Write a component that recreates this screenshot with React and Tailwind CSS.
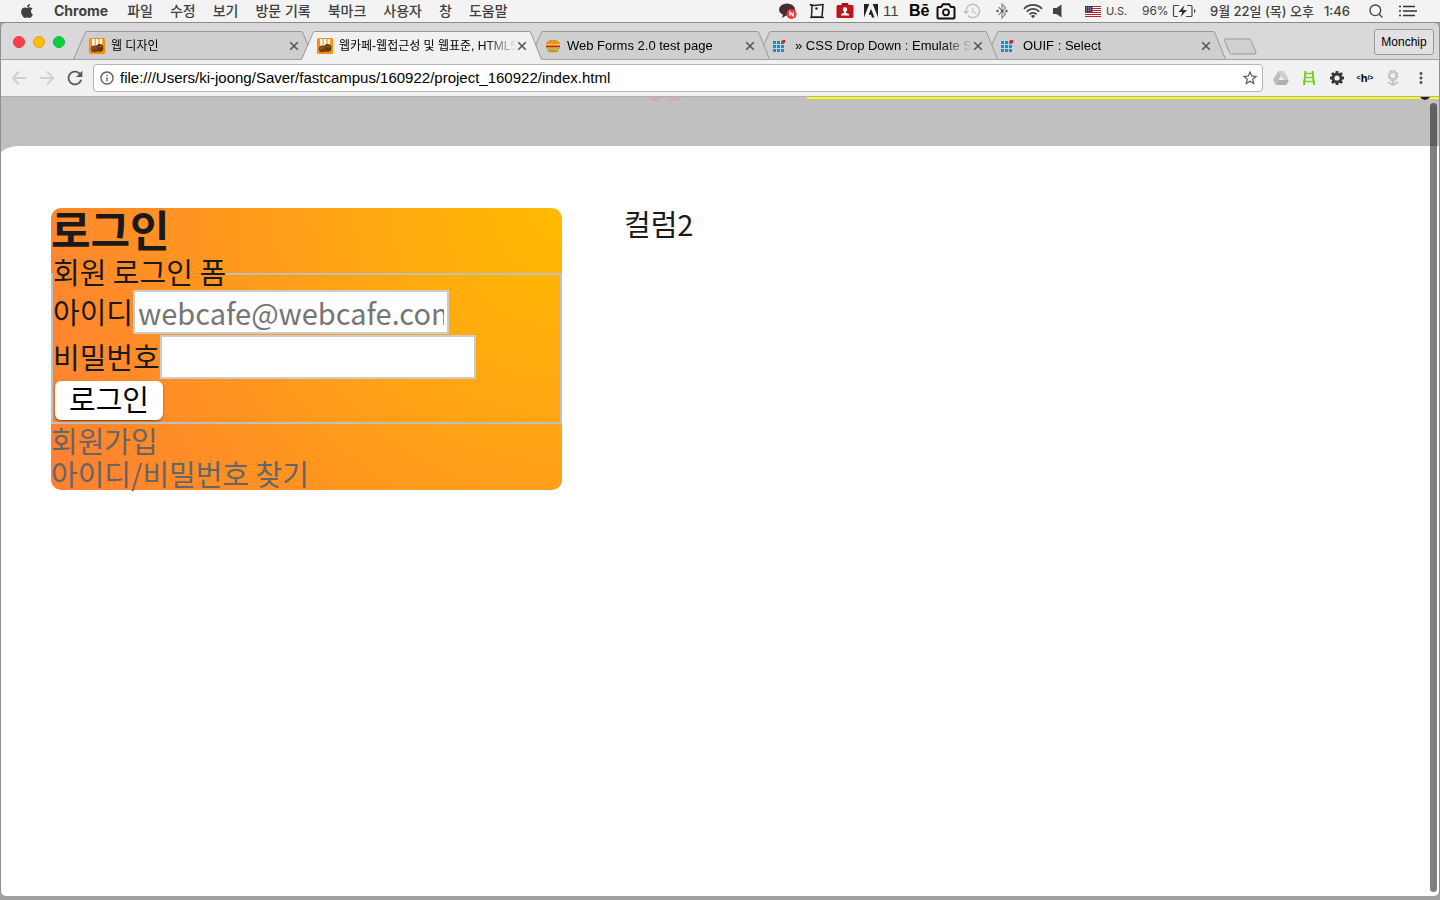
import React from "react";
import { FaApple } from "react-icons/fa";
import { MdRefresh, MdInfoOutline, MdStarBorder, MdMoreVert, MdHistory } from "react-icons/md";
import { Search } from "lucide-react";

const MENUS = ["파일", "수정", "보기", "방문 기록", "북마크", "사용자", "창", "도움말"];

const TABS = [
  { title: "웹 디자인", icon: "cafe", z: "z-40", size: "text-[12px]" },
  { title: "웹카페-웹접근성 및 웹표준, HTML5", icon: "cafe", active: true, z: "z-50", size: "text-[12px]" },
  { title: "Web Forms 2.0 test page", icon: "burger", z: "z-30", size: "text-[13px]" },
  { title: "» CSS Drop Down : Emulate S", icon: "dots", z: "z-20", size: "text-[13px]" },
  { title: "OUIF : Select", icon: "dots", z: "z-10", size: "text-[13px]" },
];

function Favicon({ kind }) {
  if (kind === "cafe") {
    return (
      <svg viewBox="0 0 16 16" className="size-4 shrink-0">
        <rect width="16" height="16" rx="1.5" fill="#ff8c0a" />
        <path d="M3 1h2.600v6.500H3zM6.800 1h2.600v6.500H6.800zM10.600 1h2.600v6.500h-2.600z" fill="#fff" />
        <ellipse cx="5.500" cy="11" rx="3.700" ry="3.200" fill="#6f4318" />
        <ellipse cx="10.700" cy="9.900" rx="3.700" ry="3.800" fill="#5f3913" />
        <path d="M3 10.500q2.500-2 5 0M8.500 9q2.500-1.500 4.500.5" stroke="#a8733a" strokeWidth=".8" fill="none" />
      </svg>
    );
  }
  if (kind === "burger") {
    return (
      <svg viewBox="0 0 16 16" className="size-4 shrink-0">
        <path d="M1 7C1 3.500 4 2 8 2s7 1.500 7 5z" fill="#e08a1e" />
        <path d="M4 4h1v1H4zM7 3h1v1H7zM10 4h1v1h-1zM12 5h1v1h-1zM6 5h1v1H6z" fill="#ffd070" />
        <rect x="1" y="6" width="14" height="1.500" fill="#ffd21a" />
        <rect x="1" y="7.500" width="14" height="2" fill="#d8201a" />
        <path d="M1 9.500h14v1l-2 1-2-1-2 1-2-1-2 1-2-1-2 .5z" fill="#8ac43a" />
        <path d="M2 11.500h12c0 2-2 3-6 3s-6-1-6-3z" fill="#e08a1e" />
      </svg>
    );
  }
  return (
    <svg viewBox="0 0 16 16" className="size-4 shrink-0">
      {[4, 8, 12].map((y) =>
        [0, 4, 8].map((x) => <rect key={`${x}-${y}`} x={x} y={y - 1} width="3" height="3" fill="#0a94d0" />)
      )}
      <rect x="9" y="2" width="3" height="3" fill="#ff1a1a" />
    </svg>
  );
}

function Tab({ tab }) {
  return (
    <div className={`relative -mr-[13px] flex h-[29px] w-[241px] items-center pl-4 pr-[15px] ${tab.z}`}>
      <svg viewBox="0 0 241 29" preserveAspectRatio="none" className="absolute inset-0 size-full" aria-hidden="true">
        <path
          d="M0 29 L1 28 12 2 Q12.500.5 14 .5 H228 Q229.500.5 230 2 L240 28 241 29z"
          fill={tab.active ? "#f1f1f1" : "#cfcfcf"}
        />
        <path d="M.5 28.500 12 2 Q12.500.5 14 .5 H228 Q229.500.5 230 2 L240.500 28.500" fill="none" stroke="#999" />
        {!tab.active && <path d="M0 28.500H241" stroke="#a3a3a3" />}
      </svg>
      <button
        type="button"
        role="tab"
        aria-selected={!!tab.active}
        className={`relative flex min-w-0 flex-1 items-center gap-1.5 text-left leading-4 text-black ${tab.size}`}
      >
        <Favicon kind={tab.icon} />
        <span className="flex-1 overflow-hidden whitespace-nowrap [mask-image:linear-gradient(to_right,#000_82%,transparent)]">
          {tab.title}
        </span>
      </button>
      <button type="button" aria-label="Close tab" className="relative">
        <svg viewBox="0 0 10 10" className="size-2.5">
          <path d="M1.200 1.200 8.800 8.800M8.800 1.200 1.200 8.800" stroke="#555" strokeWidth="1.600" />
        </svg>
      </button>
    </div>
  );
}

function StatusIcons() {
  return (
    <div className="flex items-center">
      <svg viewBox="0 0 20 18" className="h-[18px] w-5">
        <ellipse cx="9" cy="7.500" rx="8" ry="6" fill="#4a2c2e" />
        <path d="M5 12l-1 4 5-3z" fill="#4a2c2e" />
        <circle cx="13.500" cy="12" r="5" fill="#f5343c" />
        <path d="M11.800 14v-4l3.400 4v-4" stroke="#fff" strokeWidth="1.200" fill="none" />
      </svg>
      <svg viewBox="0 0 16 16" className="ml-[11px] size-4">
        <path d="M1 1.500l4 1 9-1-1 12.500H2.500L3 3z" fill="none" stroke="#222" strokeWidth="1.500" />
        <path d="M1 14.500h14" stroke="#222" strokeWidth="1.200" />
        <circle cx="7.500" cy="5.500" r="1.200" fill="#222" />
      </svg>
      <svg viewBox="0 0 18 16" className="ml-[11px] h-4 w-[18px]">
        <rect x="5.500" y="0" width="7" height="4" rx="1" fill="#a31218" />
        <rect x=".5" y="2" width="17" height="13" rx="1.500" fill="#c0141b" />
        <circle cx="9" cy="6.500" r="2.200" fill="#fff" />
        <path d="M8 8h2v2l3 1v1.500H5V11l3-1z" fill="#fff" />
      </svg>
      <svg viewBox="0 0 14 14" className="ml-[10px] size-3.5">
        <path d="M0 0h5.300L0 13.500zM8.700 0H14v13.500zM7 4.800l3.500 8.700H8l-1-2.700H4.600z" fill="#222" />
      </svg>
      <span className="ml-[5px] w-4 font-['Liberation_Sans'] text-[15px] font-normal">11</span>
      <span className="ml-[10px] w-5 font-['Liberation_Sans'] text-[16px] font-bold text-black">Bē</span>
      <svg viewBox="0 0 20 17" className="ml-[7px] h-[17px] w-5">
        <path d="M2.500 4H5l2-2.700h6L15 4h2.500a1 1 0 0 1 1 1v9.500a1 1 0 0 1-1 1h-15a1 1 0 0 1-1-1V5a1 1 0 0 1 1-1z" fill="none" stroke="#111" strokeWidth="2" />
        <circle cx="10" cy="9.300" r="3" fill="none" stroke="#111" strokeWidth="1.800" />
      </svg>
      <MdHistory className="ml-1.5 size-5 text-[#c2c2c2]" />
      <svg viewBox="0 0 14 18" className="ml-[13px] h-[18px] w-3.5">
        <path d="M3.500 5l7 7-3.500 4V2l3.500 4-7 7" fill="none" stroke="#8a8a8a" strokeWidth="1.200" />
        <circle cx="2.500" cy="9" r="1.200" fill="#555" />
        <circle cx="7" cy="9" r="1.200" fill="#555" />
        <circle cx="11.500" cy="9" r="1.200" fill="#555" />
      </svg>
      <svg viewBox="0 0 20 16" className="ml-3.5 h-4 w-5">
        <g fill="none" stroke="#444" strokeWidth="1.800">
          <path d="M1 5.800a12.500 12.500 0 0 1 18 0" />
          <path d="M3.800 8.600a8.600 8.600 0 0 1 12.400 0" />
          <path d="M6.500 11.300a4.900 4.900 0 0 1 7 0" />
        </g>
        <path d="M10 15.300 7.900 13a3 3 0 0 1 4.200 0z" fill="#444" />
      </svg>
      <svg viewBox="0 0 10 14" className="ml-2.5 h-3.5 w-2.5">
        <path d="M0 4h3.500L8.500 0.500v13L3.500 10H0z" fill="#444" />
      </svg>
      <svg viewBox="0 0 16 11" className="ml-[22px] h-[11px] w-4">
        <rect width="16" height="11" fill="#fff" />
        {[0, 2, 4, 6, 8, 10].map((y) => (
          <rect key={y} y={y} width="16" height="1" fill="#b3262e" />
        ))}
        <rect width="7.500" height="6" fill="#35356b" />
        <path d="M1 1.500h6M1 3h6M1 4.500h6" stroke="#d6d6ea" strokeWidth=".6" strokeDasharray="1 1" />
      </svg>
      <span className="ml-[5px] w-6 text-[11px] font-normal">U.S.</span>
      <span className="ml-3 w-[26px] text-[12px] font-normal">96%</span>
      <svg viewBox="0 0 24 14" className="ml-1 h-3.5 w-6">
        <path d="M7 1.500H2.500a1 1 0 0 0-1 1v9a1 1 0 0 0 1 1H6M15 1.500h4a1 1 0 0 1 1 1v9a1 1 0 0 1-1 1h-5" fill="none" stroke="#444" strokeWidth="1.200" />
        <path d="M12.500 1 6.500 8h3.700L8.700 13l6.300-7h-4z" fill="#333" />
        <path d="M22 5v4q1.500-.5 1.500-2T22 5z" fill="#444" />
      </svg>
      <time className="ml-3.5 flex gap-2.5 whitespace-nowrap text-[13px]">
        <span>9월 22일 (목) 오후</span>
        <span>1:46</span>
      </time>
      <Search className="ml-[18px] size-4 text-[#444]" strokeWidth={2} />
      <svg viewBox="0 0 18 12" className="ml-[15px] h-3 w-[18px]">
        <path d="M0 1.500h2M0 6h2M0 10.500h2M4 1.500h12M4 6h14M4 10.500h12" stroke="#333" strokeWidth="1.700" />
      </svg>
    </div>
  );
}

function MenuBar() {
  return (
    <header className="flex h-[23px] shrink-0 items-center justify-between border-b border-[#8a8a8a] bg-[#f3f3f3] pl-[19px] pr-[23px] font-['Inter','Noto_Sans_CJK_KR',sans-serif] font-medium leading-[22px] text-[#404040]">
      <nav className="flex items-center gap-[17px] whitespace-nowrap text-[14px]">
        <FaApple className="size-4" />
        <span className="mx-0.5 font-bold">Chrome</span>
        {MENUS.map((m) => (
          <span key={m}>{m}</span>
        ))}
      </nav>
      <StatusIcons />
    </header>
  );
}

function Extensions() {
  const cell = "flex w-7 items-center justify-center";
  return (
    <div className="ml-1 flex items-center">
      <button type="button" aria-label="Drive" className={cell}>
        <svg viewBox="0 0 16 14" className="h-3.5 w-4">
          <path d="M5.300 0h5.400L16 9h-5.300z" fill="#cfcfcf" />
          <path d="M5.300 0 0 9l2.700 5L8 4.700z" fill="#bdbdbd" />
          <path d="M5.500 9H16l-2.700 5H2.700z" fill="#b0b0b0" />
        </svg>
      </button>
      <button type="button" aria-label="Ladder" className={cell}>
        <svg viewBox="0 0 14 16" className="h-4 w-3.5">
          <path d="M3.500 1 2 15M10.500 1 12 15" stroke="#6abf1e" strokeWidth="1.800" />
          <path d="M2 3.500h10M2 7.500h10M1 11.500h12" stroke="#7ed321" strokeWidth="1.600" />
        </svg>
      </button>
      <button type="button" aria-label="Settings" className={cell}>
        <svg viewBox="0 0 16 16" className="size-4">
          <path d="M8 1v14M1 8h14M3 3l10 10M13 3 3 13" stroke="#383838" strokeWidth="2.800" />
          <circle cx="8" cy="8" r="4" fill="#f1f1f1" stroke="#383838" strokeWidth="2.800" />
        </svg>
      </button>
      <button type="button" aria-label="HTML outline" className={`${cell} text-[7px] font-bold leading-4 text-black`}>
        &lt;<span className="text-[11px]">h</span>/&gt;
      </button>
      <button type="button" aria-label="Flower" className={cell}>
        <svg viewBox="0 0 16 16" className="size-4">
          <circle cx="8" cy="5.500" r="4.300" fill="none" stroke="#c2c2c2" strokeWidth="2.400" strokeDasharray="2.400 .9" />
          <circle cx="8" cy="5.500" r="3.300" fill="none" stroke="#c2c2c2" strokeWidth="1.500" />
          <path d="M8 10v5M3 12l5 3 5-3" fill="none" stroke="#c2c2c2" strokeWidth="1.800" />
        </svg>
      </button>
      <button type="button" aria-label="Menu" className={cell}>
        <MdMoreVert className="size-[18px] text-[#555]" />
      </button>
    </div>
  );
}

function Toolbar() {
  const cell = "flex w-7 items-center justify-center";
  return (
    <div className="flex h-[37px] shrink-0 items-center border-b border-[#b0b0b0] bg-[#f1f1f1] pl-1 pr-1">
      {["Back", "Forward"].map((label) => (
        <button key={label} type="button" aria-label={label} className={cell}>
          <svg viewBox="0 0 16 16" className={label === "Forward" ? "size-4 rotate-180" : "size-4"}>
            <path d="M8 1.500 1.800 8 8 14.500M2 8h13" fill="none" stroke="#d0d0d0" strokeWidth="1.900" />
          </svg>
        </button>
      ))}
      <button type="button" aria-label="Reload" className={cell}>
        <MdRefresh className="size-[22px] text-[#5a5a5a]" />
      </button>
      <div className="ml-1 flex h-7 flex-1 items-center rounded-[4px] border border-[#b4b4b4] bg-white pl-[5px] pr-[3px]">
        <MdInfoOutline className="size-4 shrink-0 text-[#5a5a5a]" />
        <input
          aria-label="Address"
          defaultValue="file:///Users/ki-joong/Saver/fastcampus/160922/project_160922/index.html"
          className="ml-[5px] min-w-0 flex-1 bg-transparent text-[15px] leading-5 text-black outline-none"
        />
        <MdStarBorder className="size-[18px] shrink-0 text-[#5a5a5a]" />
      </div>
      <Extensions />
    </div>
  );
}

function LoginBox() {
  const field = "h-11 w-[316px] border-2 border-[#ccc] bg-white px-[3px] leading-9 placeholder:text-[#757575] outline-none";
  return (
    <section className="w-[511px] rounded-[10px] bg-[radial-gradient(circle_at_top_right,#ffbb00,#ff7f33)]">
      <h1 className="pb-2 text-[43px] font-bold leading-[41px]">로그인</h1>
      <form onSubmit={(e) => e.preventDefault()}>
        <fieldset className="border-2 border-[#c0c0c0]">
          <legend className="pb-1 leading-[29px]">회원 로그인 폼</legend>
          <div className="flex h-11 items-end">
            <label htmlFor="uid" className="leading-[46px]">아이디</label>
            <input id="uid" type="email" placeholder="webcafe@webcafe.com" className={field} />
          </div>
          <div className="flex h-[45px] items-end">
            <label htmlFor="upw" className="leading-[46px]">비밀번호</label>
            <input id="upw" type="password" className={field} />
          </div>
          <div className="flex h-[43px] items-center pl-0.5">
            <button type="submit" className="h-[39px] rounded-[6px] bg-white px-3.5 pb-1 leading-[35px] text-black shadow-[0_1px_2px_rgba(0,0,0,0.5)]">
              로그인
            </button>
          </div>
        </fieldset>
      </form>
      <a href="#join" className="block leading-[33px] text-[#666]">회원가입</a>
      <a href="#find" className="block leading-[33px] text-[#666]">아이디/비밀번호 찾기</a>
    </section>
  );
}

function Page() {
  return (
    <main className="relative flex flex-1 flex-col overflow-hidden rounded-b-[5px] bg-[#c0c0c0]">
      <div className="flex h-[49px] items-start">
        <div className="flex w-[806px] justify-end pr-[126px]">
          <svg viewBox="0 0 32 5" className="h-[5px] w-8">
            <ellipse cx="6" cy="0" rx="6.500" ry="4" fill="#d0adaf" />
            <ellipse cx="25" cy="0" rx="6.500" ry="4" fill="#cfb0b2" />
          </svg>
        </div>
        <div className="flex flex-1 justify-end border-t-2 border-[#ff0] pr-[9px]">
          <svg viewBox="0 0 10 3" className="-mt-0.5 h-[3px] w-2.5">
            <path d="M0 0h10Q8 3 5 3T0 0z" fill="#222" />
          </svg>
        </div>
      </div>
      <div className="-ml-2.5 flex flex-1 items-start gap-[62px] rounded-tl-[27px] bg-white pl-[60px] pr-[50px] pt-[62px] font-['Noto_Sans_CJK_KR',sans-serif] text-[29px] leading-[31px] text-[#1a1a1a]">
        <LoginBox />
        <p className="flex-1">컬럼2</p>
      </div>
      <div className="absolute bottom-1 right-0.5 top-1.5 w-[7px] rounded-full bg-black/50" />
    </main>
  );
}

export default function App() {
  return (
    <div className="flex min-h-screen flex-col bg-[#a0a0a0] pb-1 font-['Liberation_Sans','Noto_Sans_CJK_KR',sans-serif]">
      <MenuBar />
      <div className="flex flex-1 flex-col overflow-hidden rounded-[5px] border-x border-[#8f8f8f] bg-[#dad8da]">
        <div className="flex h-[37px] shrink-0 items-end border-b border-[#a3a3a3] pl-3 pr-[5px]">
          <div className="flex w-[60px] items-center gap-2 pb-[11px]">
            <span className="size-3 rounded-full border border-[#e0383e] bg-[#fc4048]" />
            <span className="size-3 rounded-full border border-[#e5a50a] bg-[#fdbc08]" />
            <span className="size-3 rounded-full border border-[#14b83c] bg-[#08d043]" />
          </div>
          <div role="tablist" className="-mb-px flex">
            {TABS.map((tab) => (
              <Tab key={tab.title} tab={tab} />
            ))}
          </div>
          <button type="button" aria-label="New tab" className="mb-1 ml-[10px]">
            <svg viewBox="0 0 34 17" className="h-[17px] w-[34px]">
              <path d="M2.500 1H26q1.500 0 2 1.500l5 12q.5 1.500-1 1.500H8.500Q7 16 6.500 14.500L1.500 2.500Q1 1 2.500 1z" fill="#d0d0d0" stroke="#999" />
            </svg>
          </button>
          <button type="button" className="mb-1 ml-auto h-[26px] w-[60px] rounded-[3px] border border-[#999] bg-[#e2e0e2] text-[12px] leading-6 text-black">
            Monchip
          </button>
        </div>
        <Toolbar />
        <Page />
      </div>
    </div>
  );
}
